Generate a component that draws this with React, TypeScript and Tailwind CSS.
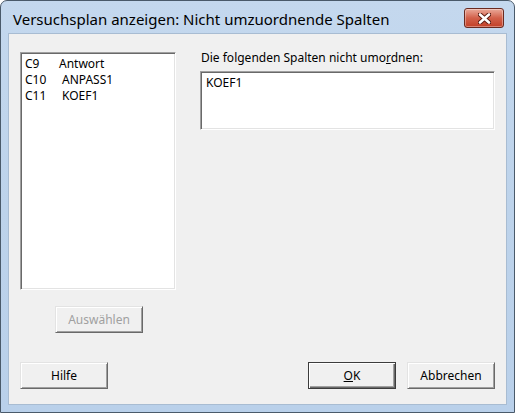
import React from "react";

const font = { fontFamily: '"Segoe UI", "Noto Sans", "Liberation Sans", sans-serif' };

function Btn({
  children,
  className = "",
  disabled = false,
  isDefault = false,
}: {
  children: React.ReactNode;
  className?: string;
  disabled?: boolean;
  isDefault?: boolean;
}) {
  return (
    <div
      className={
        "flex h-[27px] w-[88px] items-center justify-center bg-[#f0f0f0] text-[12px] " +
        (isDefault
          ? "border border-[#3c3c3c] shadow-[inset_1px_1px_0_#ffffff,inset_-1px_-1px_0_#696969,inset_-2px_-2px_0_#a0a0a0] "
          : "border border-t-[#e3e3e3] border-l-[#e3e3e3] border-r-[#696969] border-b-[#696969] shadow-[inset_1px_1px_0_#ffffff,inset_-1px_-1px_0_#a0a0a0] ") +
        (disabled ? "text-[#a0a0a0] " : "text-black ") +
        className
      }
    >
      {children}
    </div>
  );
}

export default function App() {
  return (
    <div
      className="relative flex h-[413px] w-[515px] flex-col overflow-hidden rounded-t-[7px] border border-[#4a5a6a] bg-gradient-to-b from-[#c4d8ee] via-[#bdd3eb] to-[#b9d0ea]"
      style={font}
    >
      {/* title bar */}
      <div className="flex h-[32px] shrink-0 items-center justify-between pl-[12px] pr-[10px]">
        <div className="pt-[4px] text-[15px] text-black">
          Versuchsplan anzeigen: Nicht umzuordnende Spalten
        </div>
        <div className="mt-[2px] flex h-[20px] w-[40px] items-center justify-center rounded-[3px] border border-[#6a2a20] bg-gradient-to-b from-[#e9a99a] via-[#d2604a] to-[#c23f26] shadow-[inset_0_0_0_1px_rgba(255,255,255,0.35)]">
          <svg width="13" height="11" viewBox="0 0 13 11">
            <path
              d="M2 1.5 L11 9.5 M11 1.5 L2 9.5"
              stroke="#5a1a10"
              strokeWidth="4.5"
              strokeLinecap="round"
            />
            <path
              d="M2 1.5 L11 9.5 M11 1.5 L2 9.5"
              stroke="#ffffff"
              strokeWidth="2.6"
              strokeLinecap="round"
            />
          </svg>
        </div>
      </div>

      {/* client area */}
      <div className="mx-[7px] mb-[7px] flex flex-1 flex-col border border-[#a8bcd2] bg-[#f0f0f0] px-[11px] pt-[18px] pb-[15px]">
        <div className="flex">
          <div className="flex w-[156px] flex-col">
            <div className="h-[238px] border border-t-[#a0a0a0] border-l-[#a0a0a0] border-r-[#ffffff] border-b-[#ffffff] bg-white shadow-[inset_1px_1px_0_#696969,inset_-1px_-1px_0_#e3e3e3] pl-[4px] pt-[3px] text-[12px] leading-[16px] text-black">
              <div className="flex">
                <span className="w-[34px]">C9</span>
                <span>Antwort</span>
              </div>
              <div className="flex">
                <span className="w-[37px]">C10</span>
                <span>ANPASS1</span>
              </div>
              <div className="flex">
                <span className="w-[37px]">C11</span>
                <span>KOEF1</span>
              </div>
            </div>
            <Btn disabled className="ml-[35px] mt-[16px]">
              Auswählen
            </Btn>
          </div>
          <div className="ml-[24px] flex flex-col">
            <div className="-mt-[2px] ml-[1px] text-[12px] leading-[16px] text-black">
              Die folgenden Spalten nicht umo<span className="underline">r</span>dnen:
            </div>
            <div className="mt-[5px] h-[59px] w-[295px] border border-t-[#a0a0a0] border-l-[#a0a0a0] border-r-[#ffffff] border-b-[#ffffff] bg-white pl-[5px] pt-[3px] text-[12px] leading-[16px] text-black shadow-[inset_1px_1px_0_#696969,inset_-1px_-1px_0_#e3e3e3]">
              KOEF1
            </div>
          </div>
        </div>
        <div className="mt-auto flex">
          <Btn>Hilfe</Btn>
          <Btn isDefault className="ml-auto">
            <span>
              <span className="underline">O</span>K
            </span>
          </Btn>
          <Btn className="ml-[11px]">Abbrechen</Btn>
        </div>
      </div>
    </div>
  );
}
